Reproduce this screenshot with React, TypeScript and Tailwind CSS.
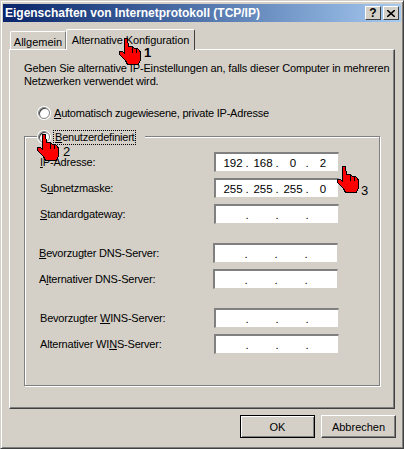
const font = "font-['Liberation_Sans',Arial,sans-serif]";

function U({ children }: { children: string }) {
  return <span className="underline underline-offset-1">{children}</span>;
}

function Hand({ className, label, labelClass }: { className: string; label: string; labelClass: string }) {
  return (
    <div className={`absolute z-20 w-[36px] h-[30px] ${className}`}>
      <svg width="23" height="28" viewBox="0 0 23 28" className="absolute left-0 top-0" shapeRendering="crispEdges">
        <path
          d="M5.5 .5 L8.5 .5 L9.5 8.5 L13.5 8.5 L15.5 10.5 L18.5 10.5 L20.5 12.5 L21.5 14.5 L21.5 21.5 L19.5 26.5 L8.5 26.5 L6.5 22.5 L.5 16.5 L.5 13.5 L3.5 13.5 L5.5 15.5 Z"
          fill="#ff0000"
          stroke="#000"
        />
        <path d="M13.5 9 V15 M17.5 11 V15" stroke="#000" fill="none" />
      </svg>
      <span className={`absolute text-[13px] leading-none text-black ${labelClass}`}>{label}</span>
    </div>
  );
}

function Field({ values }: { values?: string[] }) {
  const v = values ?? ["", "", "", ""];
  return (
    <div className="w-[125px] h-[20px] bg-white border border-t-[2px] border-l-[2px] border-t-[#808080] border-l-[#808080] border-r-[#d4d0c8] border-b-[#d4d0c8] flex items-center pl-[7px] text-[11.5px] text-black shrink-0">
      {v.map((x, i) => (
        <div key={i} className="flex items-center w-[30px] shrink-0">
          <span className="w-[20px] text-center">{x}</span>
          {i < 3 && <span className="w-[4px] ml-[2px] text-center">.</span>}
        </div>
      ))}
    </div>
  );
}

function Row({ label, values, offset, fieldClass }: { label: React.ReactNode; values?: string[]; offset?: string; fieldClass?: string }) {
  return (
    <div className="flex items-center justify-between h-[20px]">
      <span className={`tracking-[-0.2px] ${offset ?? ""}`}>{label}</span>
      <div className={fieldClass ?? ""}>
        <Field values={values} />
      </div>
    </div>
  );
}

function Radio() {
  return (
    <span className="w-[12px] h-[12px] rounded-full bg-white border border-[#808080] shadow-[inset_1px_1px_0_#404040,0_0_0_1px_#ffffff] shrink-0" />
  );
}

function TitleBtn({ children }: { children: React.ReactNode }) {
  return (
    <div className="w-[16px] h-[14px] bg-[#d4d0c8] border border-t-white border-l-white border-r-[#404040] border-b-[#404040] flex items-center justify-center text-[12px] font-bold text-black leading-none">
      {children}
    </div>
  );
}

export default function App() {
  return (
    <div className={`relative w-[404px] h-[449px] bg-[#d4d0c8] overflow-hidden text-[11px] leading-[14px] text-black ${font} border border-b-[#404040] border-r-[#404040] border-t-[#d4d0c8] border-l-[#d4d0c8] shadow-[inset_1px_1px_0_#ffffff,inset_-1px_-1px_0_#808080]`}>
      <div className="flex flex-col h-full pt-[3px] px-[2px]">
        {/* Title bar */}
        <div className="h-[18px] flex items-center justify-between pl-[2px] pr-[2px] bg-gradient-to-r from-[#0a246a] to-[#a6caf0] shrink-0">
          <span className="text-white font-bold text-[12px] tracking-[-0.01px]">Eigenschaften von Internetprotokoll (TCP/IP)</span>
          <div className="flex">
            <div className="mr-[2px]"><TitleBtn>?</TitleBtn></div>
            <TitleBtn>
              <svg width="8" height="7" viewBox="0 0 8 7"><path d="M0 0 L8 7 M8 0 L0 7" stroke="#000" strokeWidth="1.6" /></svg>
            </TitleBtn>
          </div>
        </div>

        {/* Tabs */}
        <div className="flex items-end h-[28px] pl-[7px] shrink-0 relative z-10">
          <div className="h-[18px] w-[56px] mb-[1px] flex items-center justify-center bg-[#d4d0c8] border border-b-0 border-t-white border-l-white border-r-[#808080] rounded-t-[2px] pt-[2px] whitespace-nowrap">
            Allgemein
          </div>
          <div className="h-[21px] w-[129px] flex items-center justify-center bg-[#d4d0c8] border border-b-0 border-t-white border-l-white border-r-[#404040] rounded-t-[2px] whitespace-nowrap tracking-[-0.1px]">
            Alternative Konfiguration
          </div>
        </div>

        {/* Tab panel */}
        <div className="ml-[6px] w-[386px] h-[360px] border border-t-white border-l-white border-r-[#404040] border-b-[#404040] shadow-[inset_-1px_-1px_0_#808080] pl-[14px] pt-[12px] -mt-[1px] shrink-0">
          <p className="leading-[13px] whitespace-nowrap tracking-[-0.14px]">
            Geben Sie alternative IP-Einstellungen an, falls dieser Computer in mehreren
            <br />
            Netzwerken verwendet wird.
          </p>
          <div className="flex items-center gap-[4px] mt-[18px] ml-[14px] h-[14px]">
            <Radio />
            <span className="tracking-[-0.22px]"><U>A</U>utomatisch zugewiesene, private IP-Adresse</span>
          </div>

          {/* Group box */}
          <div className="mt-[16px] w-[356px] h-[250px] border border-[#808080] shadow-[inset_1px_1px_0_#ffffff,1px_1px_0_#ffffff] px-[15px]">
            <div className="flex items-center h-[14px] -mt-[7px] -ml-[2px] w-fit bg-[#d4d0c8] pr-[9px] gap-[3px]">
              <Radio />
              <span className="border border-dotted border-black px-[1px] leading-[13px] tracking-[-0.22px]"><U>B</U>enutzerdefiniert</span>
            </div>
            <div className="flex flex-col pr-[25px] mt-[8px]">
              <div className="flex flex-col gap-[6px]">
                <Row label={<><U>I</U>P-Adresse:</>} values={["192", "168", "0", "2"]} />
                <Row label={<>S<U>u</U>bnetzmaske:</>} values={["255", "255", "255", "0"]} />
                <Row label={<><U>S</U>tandardgateway:</>} />
              </div>
              <div className="flex flex-col gap-[6px] mt-[19px]">
                <Row label={<><U>B</U>evorzugter DNS-Server:</>} offset="-ml-[1px]" fieldClass="-translate-x-[1px]" />
                <Row label={<>A<U>l</U>ternativer DNS-Server:</>} offset="-ml-[1px]" fieldClass="-translate-x-[1px]" />
              </div>
              <div className="flex flex-col gap-[6px] mt-[19px]">
                <Row label={<>Bevorzugter <U>W</U>INS-Server:</>} />
                <Row label={<>Alternativer WI<U>N</U>S-Server:</>} />
              </div>
            </div>
          </div>
        </div>

        {/* Buttons */}
        <div className="flex justify-end gap-[6px] mt-[6px] mr-[5px]">
          <button className="w-[75px] h-[23px] bg-[#d4d0c8] border border-black shadow-[inset_1px_1px_0_#ffffff,inset_-1px_-1px_0_#808080]">OK</button>
          <button className="w-[75px] h-[23px] bg-[#d4d0c8] border border-t-white border-l-white border-r-[#404040] border-b-[#404040] shadow-[inset_-1px_-1px_0_#808080]">Abbrechen</button>
        </div>
      </div>

      <Hand className="left-[118px] top-[37px]" label="1" labelClass="left-[25px] top-[8px] font-bold" />
      <Hand className="left-[36px] top-[133px]" label="2" labelClass="left-[26px] top-[11px]" />
      <Hand className="left-[336px] top-[165px]" label="3" labelClass="left-[24px] top-[18px]" />
    </div>
  );
}
